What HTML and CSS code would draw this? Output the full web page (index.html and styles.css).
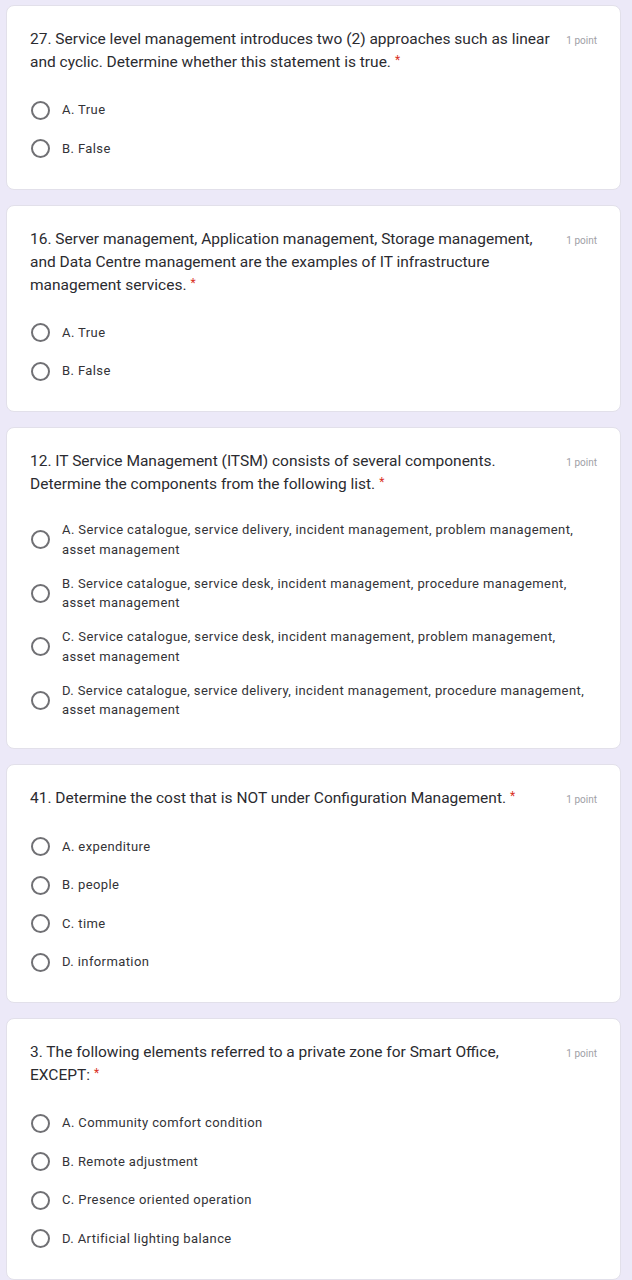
FILE: index.html
```html
<!DOCTYPE html>
<html lang="en">
<head>
<meta charset="utf-8">
<title>Quiz</title>
<link rel="stylesheet" href="styles.css">
</head>
<body>
<main class="form">

  <section class="card">
    <div class="head">
      <div class="title">27. Service level management introduces two (2) approaches such as linear<br>and cyclic. Determine whether this statement is true.<span class="req">*</span></div>
      <div class="points">1 point</div>
    </div>
    <div class="options">
      <label class="opt"><span class="radio"></span><span class="text">A. True</span></label>
      <label class="opt"><span class="radio"></span><span class="text">B. False</span></label>
    </div>
  </section>

  <section class="card">
    <div class="head">
      <div class="title">16. Server management, Application management, Storage management,<br>and Data Centre management are the examples of IT infrastructure<br>management services.<span class="req">*</span></div>
      <div class="points">1 point</div>
    </div>
    <div class="options">
      <label class="opt"><span class="radio"></span><span class="text">A. True</span></label>
      <label class="opt"><span class="radio"></span><span class="text">B. False</span></label>
    </div>
  </section>

  <section class="card">
    <div class="head">
      <div class="title">12. IT Service Management (ITSM) consists of several components.<br>Determine the components from the following list.<span class="req">*</span></div>
      <div class="points">1 point</div>
    </div>
    <div class="options">
      <label class="opt"><span class="radio"></span><span class="text">A. Service catalogue, service delivery, incident management, problem management,<br>asset management</span></label>
      <label class="opt"><span class="radio"></span><span class="text">B. Service catalogue, service desk, incident management, procedure management,<br>asset management</span></label>
      <label class="opt"><span class="radio"></span><span class="text">C. Service catalogue, service desk, incident management, problem management,<br>asset management</span></label>
      <label class="opt"><span class="radio"></span><span class="text">D. Service catalogue, service delivery, incident management, procedure management,<br>asset management</span></label>
    </div>
  </section>

  <section class="card">
    <div class="head">
      <div class="title">41. Determine the cost that is NOT under Configuration Management.<span class="req">*</span></div>
      <div class="points">1 point</div>
    </div>
    <div class="options">
      <label class="opt"><span class="radio"></span><span class="text">A. expenditure</span></label>
      <label class="opt"><span class="radio"></span><span class="text">B. people</span></label>
      <label class="opt"><span class="radio"></span><span class="text">C. time</span></label>
      <label class="opt"><span class="radio"></span><span class="text">D. information</span></label>
    </div>
  </section>

  <section class="card">
    <div class="head">
      <div class="title">3. The following elements referred to a private zone for Smart Office,<br>EXCEPT:<span class="req">*</span></div>
      <div class="points">1 point</div>
    </div>
    <div class="options">
      <label class="opt"><span class="radio"></span><span class="text">A. Community comfort condition</span></label>
      <label class="opt"><span class="radio"></span><span class="text">B. Remote adjustment</span></label>
      <label class="opt"><span class="radio"></span><span class="text">C. Presence oriented operation</span></label>
      <label class="opt"><span class="radio"></span><span class="text">D. Artificial lighting balance</span></label>
    </div>
  </section>

</main>
</body>
</html>
```

FILE: styles.css
```css
* { box-sizing: border-box; }

html, body {
  margin: 0;
  padding: 0;
  background: #ece9f8;
}

body {
  font-family: Roboto, "Liberation Sans", sans-serif;
  color: #2a2a2e;
}

.form {
  display: flex;
  flex-direction: column;
  gap: 15px;
  padding: 5px 11px 20px 6px;
}

.card {
  background: #ffffff;
  border: 1px solid #e2e0ea;
  border-radius: 8px;
  padding: 22px 23px 28px 23px;
}

.head {
  display: flex;
  align-items: flex-start;
  justify-content: space-between;
}

.title {
  font-size: 15.5px;
  line-height: 23px;
  letter-spacing: 0;
  color: #2b2b30;
}

.req {
  color: #d93025;
  margin-left: 4px;
  font-size: 12px;
  vertical-align: top;
  line-height: 18px;
}

.points {
  flex: none;
  font-size: 10px;
  line-height: 23px;
  color: #a0a0a6;
  padding-top: 1px;
}

.options {
  display: flex;
  flex-direction: column;
  gap: 14.5px;
  margin-top: 24px;
}

.opt {
  display: flex;
  align-items: center;
  gap: 12px;
  min-height: 24px;
}

.radio {
  flex: none;
  width: 19px;
  height: 19px;
  margin-left: 1px;
  border: 2px solid #707074;
  border-radius: 50%;
}

.text {
  font-size: 13px;
  line-height: 19.5px;
  letter-spacing: 0.4px;
  color: #333337;
}
```
